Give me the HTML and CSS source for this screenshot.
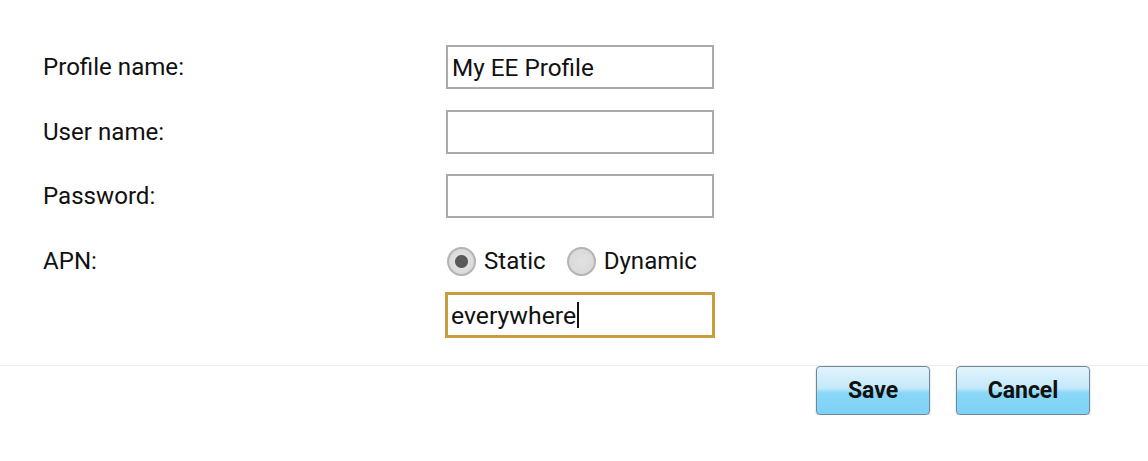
FILE: index.html
```html
<!DOCTYPE html>
<html lang="en">
<head>
  <meta charset="UTF-8">
  <title>Edit Profile</title>
  <link rel="stylesheet" href="styles.css">
</head>
<body>
  <form id="profile-form">
    <div class="fields">
      <div class="row">
        <label class="label" for="profile-name">Profile name:</label>
        <input class="field" type="text" id="profile-name" value="My EE Profile" />
      </div>
      <div class="row">
        <label class="label" for="user-name">User name:</label>
        <input class="field" type="text" id="user-name" />
      </div>
      <div class="row">
        <label class="label" for="password">Password:</label>
        <input class="field" type="password" id="password" />
      </div>
      <div class="row">
        <span class="label">APN:</span>
        <div class="radios">
          <label class="radio"><input type="radio" name="apn" value="static" checked /> Static</label>
          <label class="radio"><input type="radio" name="apn" value="dynamic" /> Dynamic</label>
        </div>
      </div>
      <div class="row apn-row">
        <span class="label"></span>
        <div class="field active">everywhere<span class="caret"></span></div>
      </div>
    </div>
    <div class="actions">
      <button type="submit" class="btn save">Save</button>
      <button type="button" class="btn cancel">Cancel</button>
    </div>
  </form>
</body>
</html>
```

FILE: styles.css
```css
body {
  margin: 0;
  font-family: Roboto, "Liberation Sans", sans-serif;
  background: white;
  color: #111;
}
.fields {
  padding: 45px 0 0 43px;
}
.row {
  display: flex;
  align-items: center;
  height: 44px;
  margin-bottom: 20px;
}
.row:first-child {
  margin-bottom: 21px;
}
.row:nth-child(3) {
  margin-bottom: 21px;
}
.row:nth-child(4) {
  margin-bottom: 9px;
}
.label {
  width: 403px;
  font-size: 24.1px;
}
.field {
  box-sizing: border-box;
  width: 268px;
  height: 44px;
  border: 2px solid #aaa;
  padding: 0 4px;
  font-family: inherit;
  font-size: 24.3px;
  color: #111;
  outline: none;
}
.apn-row {
  height: 46px;
  margin-bottom: 27px;
}
.field.active {
  display: flex;
  align-items: center;
  width: 270px;
  height: 46px;
  margin-left: -1px;
  border: 3px solid #c99d3d;
  padding: 0 3px;
  font-size: 24.8px;
}
.caret {
  display: inline-block;
  width: 2px;
  height: 26px;
  margin-left: 1px;
  background: #111;
}
.radios {
  display: flex;
  gap: 21px;
  margin-left: 1px;
}
.radio {
  display: flex;
  align-items: center;
  gap: 8px;
  font-size: 24.1px;
}
.radio input {
  appearance: none;
  box-sizing: border-box;
  width: 29px;
  height: 29px;
  margin: 0;
  border-radius: 50%;
  border: 2px solid #b4b4b4;
  background: radial-gradient(circle, #e2e2e2 0%, #d6d6d6 100%);
}
.radio input:checked {
  background: radial-gradient(circle, #5a5a5a 0 6px, #e0e0e0 7px, #d6d6d6 100%);
}
.actions {
  display: flex;
  justify-content: flex-end;
  gap: 25px;
  padding-right: 58px;
  border-top: 1px solid #f0f0f0;
}
.btn {
  height: 49px;
  border: 1px solid #6f8796;
  border-radius: 4px;
  background: linear-gradient(#e2f4fd, #c4e8fa 45%, #8ad7f8 55%, #7dd2f8);
  box-shadow: 0 1px 2px rgba(0,0,0,0.25);
  font-family: inherit;
  font-size: 23px;
  font-weight: bold;
  color: #111;
  cursor: pointer;
}
.save {
  width: 114px;
  margin-right: 1px;
}
.cancel {
  width: 134px;
}
```
